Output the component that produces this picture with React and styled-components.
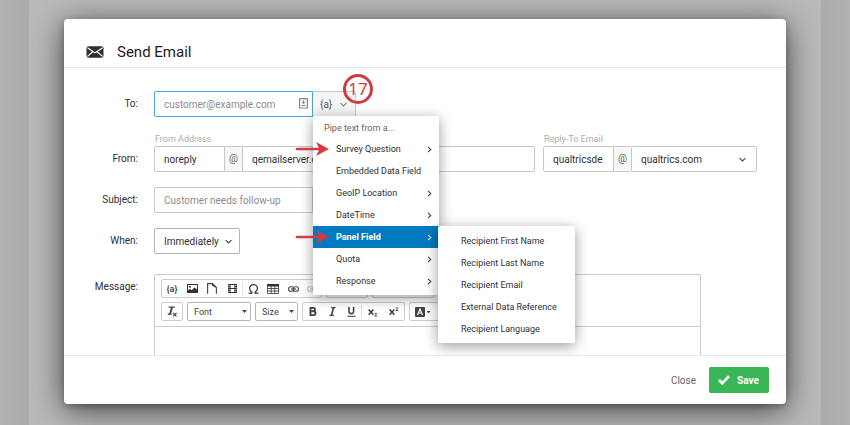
import React from "react";
import styled, { createGlobalStyle, css } from "styled-components";

const GlobalStyle = createGlobalStyle`
  *, *::before, *::after { box-sizing: border-box; }
  body {
    margin: 0;
    background: #b0b0b0;
    color: #2c3034;
    font-family: Roboto, "Liberation Sans", sans-serif;
    font-size: 10px;
  }
  button, input, select { font: inherit; color: inherit; margin: 0; }
`;

const Page = styled.div`
  height: 100vh;
  min-height: 425px;
  padding: 0 29px;
  background: linear-gradient(90deg, #b3b3b3, #ababab 29px, #ababab calc(100% - 29px), #b1b1b1);
`;

const Backdrop = styled.div`
  display: flex;
  height: 100%;
  padding: 19px 35px 21px;
  background: #bababa;
  overflow: hidden;
`;

const Dialog = styled.section`
  display: flex;
  flex: 1;
  flex-direction: column;
  min-width: 0;
  background: #fff;
  border-radius: 4px;
  box-shadow: 0 6px 32px rgba(0, 0, 0, 0.65), 0 2px 6px rgba(0, 0, 0, 0.25);
`;

const Header = styled.header`
  display: flex;
  align-items: center;
  gap: 13px;
  height: 49px;
  padding: 17px 22px 0;
  border-bottom: 1px solid #e6e6e6;
`;

const Title = styled.h1`
  margin: 0;
  font-size: 15px;
  font-weight: 400;
  color: #1c1c1c;
`;

const Form = styled.form`
  display: flex;
  flex: 1;
  flex-direction: column;
  min-height: 0;
  padding: 23px 29px 0 0;
  gap: 15px;
  overflow: hidden;
`;

const Row = styled.div`
  display: grid;
  grid-template-columns: 74px minmax(0, 1fr);
  column-gap: 16px;
  align-items: end;
  ${(p) => p.$fill && css`flex: 1; align-items: stretch; margin-top: 5px;`}
`;

const Label = styled.label`
  line-height: 26px;
  text-align: right;
`;

const Combo = styled.div`
  display: flex;
  height: 26px;
`;

const PipeCombo = styled(Combo)`
  width: 202px;
`;

const InputWrap = styled.div`
  position: relative;
  flex: 1;
  min-width: 0;
`;

const TextInput = styled.input`
  width: ${(p) => p.$width || "100%"};
  height: 26px;
  min-width: 0;
  padding: 0 9px;
  background: #fff;
  border: 1px solid ${(p) => (p.$focused ? "#49a7de" : "#c8c8c8")};
  border-radius: ${(p) => (p.$end ? "0 2px 2px 0" : "2px 0 0 2px")};
  outline: none;
  &::placeholder { color: #8c8c8c; opacity: 1; }
`;

const InputIcon = styled.span`
  position: absolute;
  top: 7px;
  right: 5px;
  display: flex;
`;

const PipeWrap = styled.div`
  position: relative;
`;

const PipeButton = styled.button`
  display: flex;
  align-items: center;
  justify-content: space-between;
  width: 43px;
  height: 26px;
  padding: 0 8px 0 7px;
  color: #555;
  background: #f5f5f5;
  border: 1px solid #c8c8c8;
  border-left: 0;
  border-radius: 0 2px 2px 0;
`;

const Badge = styled.span`
  position: absolute;
  top: -17px;
  left: 30px;
  width: 30px;
  height: 30px;
  color: #cf3a44;
  border: 3px solid #cf3a44;
  border-radius: 50%;
  font: 17px/24px "Noto Sans", sans-serif;
  text-align: center;
`;

const MenuSurface = css`
  position: absolute;
  z-index: 5;
  margin: 0;
  list-style: none;
  background: #fff;
  border-radius: 2px;
  box-shadow: 0 3px 14px rgba(0, 0, 0, 0.4);
`;

const Menu = styled.ul`
  ${MenuSurface}
  top: 25px;
  left: 0;
  width: 126px;
  padding: 2px 0 3px;
`;

const SubMenu = styled.ul`
  ${MenuSurface}
  top: 0;
  left: calc(100% - 1px);
  width: 137px;
  padding: 4px 0 3px;
`;

const MenuTitle = styled.li`
  padding-left: 11px;
  font-size: 9px;
  line-height: 20px;
  color: #666;
`;

const MenuItem = styled.li`
  position: relative;
`;

const MenuButton = styled.button`
  display: flex;
  align-items: center;
  justify-content: space-between;
  width: 100%;
  height: 22px;
  padding: 0 6px 0 23px;
  font-size: 9px;
  font-weight: ${(p) => (p.$active ? 700 : 400)};
  white-space: nowrap;
  color: ${(p) => (p.$active ? "#fff" : "#2c3034")};
  background: ${(p) => (p.$active ? "#027ac0" : "transparent")};
  border: 0;
`;

const Pointer = styled.svg`
  position: absolute;
  top: 4px;
  left: -18px;
  pointer-events: none;
`;

const Addresses = styled.div`
  display: grid;
  grid-template-columns: 381fr 214fr;
  gap: 8px;
`;

const Address = styled.fieldset`
  min-width: 0;
  margin: 0;
  padding: 0;
  border: 0;
`;

const Legend = styled.legend`
  padding: 0 0 0 1px;
  font-size: 9px;
  line-height: 14px;
  color: #adadad;
`;

const At = styled.span`
  width: 17px;
  line-height: 24px;
  text-align: center;
  color: #666;
  background: #f7f7f7;
  border: solid #c8c8c8;
  border-width: 1px 0;
`;

const SelectWrap = styled.div`
  position: relative;
  flex: ${(p) => (p.$grow ? 1 : "none")};
  width: ${(p) => p.$width || "auto"};
  min-width: 0;
`;

const Select = styled.select`
  display: block;
  width: 100%;
  height: ${(p) => (p.$small ? 19 : 26)}px;
  padding: 0 9px;
  appearance: none;
  background: #fff;
  border: 1px solid ${(p) => (p.$strong ? "#b5b5b5" : "#c8c8c8")};
  border-radius: 2px;
  ${(p) => p.$small && css`padding: 0 6px; font-size: 9px; color: #444;`}
`;

const SelectIcon = styled.span`
  position: absolute;
  top: 0;
  bottom: 0;
  right: ${(p) => p.$right}px;
  display: flex;
  align-items: center;
  pointer-events: none;
`;

const Editor = styled.div`
  display: flex;
  flex-direction: column;
  margin-right: 56px;
  border: 1px solid #ccc;
  border-bottom: 0;
  border-radius: 2px 2px 0 0;
`;

const Toolbar = styled.div`
  display: flex;
  flex-direction: column;
  gap: 4px;
  padding: 4px 6px 5px;
  border-bottom: 1px solid #ccc;
`;

const ToolLine = styled.div`
  display: flex;
  gap: 4px;
`;

const ToolGroup = styled.div`
  display: flex;
  align-items: center;
  height: 19px;
  border: 1px solid #ccc;
  border-radius: 2px;
`;

const Tool = styled.button`
  display: flex;
  align-items: center;
  justify-content: center;
  width: ${(p) => p.$width || 20}px;
  height: 17px;
  padding: 0;
  font-size: 9px;
  font-weight: 500;
  color: #333;
  background: none;
  border: 0;
  opacity: ${(p) => (p.$faded ? 0.3 : 1)};
`;

const Divider = styled.span`
  width: 1px;
  height: 13px;
  background: #ddd;
`;

const Message = styled.div`
  flex: 1;
  padding: 10px;
  outline: none;
`;

const Footer = styled.footer`
  display: flex;
  align-items: center;
  justify-content: flex-end;
  gap: 13px;
  height: 49px;
  padding: 0 17px;
  border-top: 1px solid #e6e6e6;
`;

const CloseButton = styled.button`
  padding: 0;
  color: #666;
  background: none;
  border: 0;
`;

const SaveButton = styled.button`
  display: flex;
  align-items: center;
  gap: 7px;
  height: 26px;
  width: 60px;
  padding: 0 9px;
  font-weight: 700;
  color: #fff;
  background: #3ab557;
  border: 0;
  border-radius: 2px;
`;

const Chevron = ({ right, color = "#888" }) => (
  <svg width="7" height="7" viewBox="0 0 7 7" fill="none" stroke={color} strokeWidth="1.1">
    <path d={right ? "M2 .8 4.8 3.5 2 6.2" : "M.6 2.2 3.5 5 6.4 2.2"} />
  </svg>
);

const Caret = () => (
  <svg width="5" height="3" viewBox="0 0 5 3" fill="#444"><path d="M0 0h5L2.5 3z" /></svg>
);

const Arrow = () => (
  <Pointer width="34" height="14" viewBox="0 0 34 14" aria-hidden="true">
    <path d="M2 7h24" stroke="#d23b45" strokeWidth="2.6" strokeLinecap="round" />
    <path d="M21 0 34 7 21 14 24.5 7z" fill="#d23b45" />
  </Pointer>
);

const EnvelopeIcon = () => (
  <svg width="18" height="12" viewBox="0 0 18 12" aria-hidden="true">
    <rect x=".5" y=".3" width="17" height="11.4" rx="2" fill="#303030" />
    <path d="M1.5 1.8 8 6.3q1 .7 2 0l6.5-4.5M1.5 10.3 6.6 6M16.5 10.3 11.4 6" fill="none" stroke="#fff" strokeWidth="1.1" />
  </svg>
);

const ContactIcon = () => (
  <svg width="9" height="11" viewBox="0 0 9 11" aria-hidden="true" fill="none" stroke="#888">
    <path d="M.6.6h7.8v9.4H.6z" strokeWidth="1.2" />
    <path d="M4.5 2.3v2.5M2.5 7.5h4" strokeWidth="1.2" />
    <path d="M2.7 4.1h3.6L4.5 6.2z" fill="#888" stroke="none" />
  </svg>
);

const ImageIcon = () => (
  <svg width="11" height="9" viewBox="0 0 11 9">
    <path fill="#333" fillRule="evenodd" d="M0 0h11v9H0zM1 1v5.5l2-1.8 1.6 1.5L7.5 3.5 10 5.5V1z" />
    <circle cx="3" cy="2.7" r="1" fill="#333" />
  </svg>
);

const PageIcon = () => (
  <svg width="10" height="11" viewBox="0 0 10 11" fill="none" stroke="#444" strokeWidth="1.1">
    <path d="M.6 10.8V.6h5l3.800 3.900v6.300M5.600.6v1.800l3.800 2.100" />
  </svg>
);

const FilmIcon = () => (
  <svg width="9" height="9" viewBox="0 0 9 9">
    <path fill="#333" fillRule="evenodd" d="M0 0h9v9H0zM2.6 1v3h3.800V1zM2.600 5v3h3.800V5zM.6 1v1h1V1zm0 2v1h1V3zm0 2v1h1V5zm0 2v1h1V7zm6.800-6v1h1V1zm0 2v1h1V3zm0 2v1h1V5zm0 2v1h1V7z" />
  </svg>
);

const OmegaIcon = () => (
  <svg width="11" height="10" viewBox="0 0 11 10" fill="none" stroke="#333" strokeWidth="1.2">
    <path d="M.6 9.2h3.3V8C2.3 7.2 1.6 6 1.6 4.5a3.9 3.9 0 0 1 7.8 0C9.4 6 8.7 7.2 7.1 8v1.200h3.300" />
  </svg>
);

const TableIcon = () => (
  <svg width="12" height="10" viewBox="0 0 12 10" fill="none" stroke="#333">
    <path d="M.5.5h11v9H.5zM.5 4.500h11M.5 7h11M4.200 2v7.500M7.800 2v7.500" strokeWidth=".8" />
    <path fill="#333" stroke="none" d="M0 0h12v2.500H0z" />
  </svg>
);

const LinkIcon = () => (
  <svg width="11" height="6" viewBox="0 0 11 6" fill="none" stroke="#444" strokeWidth="1.1">
    <rect x=".6" y=".8" width="5.2" height="4.4" rx="2" />
    <rect x="5.2" y=".8" width="5.2" height="4.4" rx="2" />
    <path d="M3 3h5" />
  </svg>
);

const BoldIcon = () => (
  <svg width="8" height="9" viewBox="0 0 8 9" fill="none" stroke="#444" strokeWidth="1.9">
    <path d="M1.500.9h2.700q1.800 0 1.800 1.700T4.200 4.300H1.500zM1.500 4.300h3q2 0 2 1.900t-2 1.900h-3z" />
  </svg>
);

const ItalicIcon = () => (
  <svg width="7" height="9" viewBox="0 0 7 9" fill="none" stroke="#444">
    <path d="M2.2.6h4.300M.5 8.400h4.300" strokeWidth="1.2" /><path d="M4.500.6 2.500 8.400" strokeWidth="1.7" />
  </svg>
);

const UnderlineIcon = () => (
  <svg width="9" height="10" viewBox="0 0 9 10" fill="none" stroke="#444">
    <path d="M2 0v4.600q0 2 2.300 2t2.300-2V0" strokeWidth="1.6" /><path d="M.5 9.300h8" strokeWidth="1.1" />
  </svg>
);

const ScriptIcon = ({ sup }) => (
  <svg width="10" height="10" viewBox="0 0 10 10" fill="none" stroke="#444">
    <path d="m.7 2.500 4.600 5.300M5.300 2.500.7 7.800" strokeWidth="1.6" />
    <path d={sup ? "M6.800 1.200q2-1.200 2 .2L6.900 3.600h2.500" : "M6.600 6.600q2-1.200 2 .2L6.700 9.100h2.500"} strokeWidth=".9" />
  </svg>
);

const ClearFormatIcon = () => (
  <svg width="11" height="11" viewBox="0 0 11 11" fill="none" stroke="#444">
    <path d="M1.600 1.200h6.200M.7 8.200h4" strokeWidth="1.3" />
    <path d="M5 1.200 3 8.200" strokeWidth="1.9" />
    <path d="m6 6.800 3.500 3.500M9.500 6.800 6 10.300" strokeWidth="1.2" />
  </svg>
);

const TextColorIcon = () => (
  <svg width="16" height="10" viewBox="0 0 16 10">
    <rect width="10" height="10" rx="1" fill="#444" />
    <path d="M2.500 8 5 2l2.500 6M3.500 6h3" fill="none" stroke="#fff" strokeWidth="1.2" />
    <path d="M11.500 4h4l-2 2.500z" fill="#444" />
  </svg>
);

const CheckIcon = () => (
  <svg width="12" height="10" viewBox="0 0 12 10" fill="none" stroke="#fff" strokeWidth="2.6">
    <path d="M1 5 4.300 8.200 11 1.200" />
  </svg>
);

const pipeItems = [
  { label: "Survey Question", nested: true, pointed: true },
  { label: "Embedded Data Field" },
  { label: "GeoIP Location", nested: true },
  { label: "DateTime", nested: true },
  {
    label: "Panel Field",
    nested: true,
    active: true,
    pointed: true,
    children: [
      "Recipient First Name",
      "Recipient Last Name",
      "Recipient Email",
      "External Data Reference",
      "Recipient Language",
    ],
  },
  { label: "Quota", nested: true },
  { label: "Response", nested: true },
];

function PipeMenu() {
  return (
    <Menu>
      <MenuTitle>Pipe text from a...</MenuTitle>
      {pipeItems.map((item) => (
        <MenuItem key={item.label}>
          <MenuButton type="button" $active={item.active}>
            {item.label}
            {item.nested && <Chevron right color={item.active ? "#cfe8f7" : "#444"} />}
          </MenuButton>
          {item.pointed && <Arrow />}
          {item.children && (
            <SubMenu>
              {item.children.map((child) => (
                <li key={child}><MenuButton type="button">{child}</MenuButton></li>
              ))}
            </SubMenu>
          )}
        </MenuItem>
      ))}
    </Menu>
  );
}

function PipeToggle({ children }) {
  return (
    <PipeWrap>
      <PipeButton type="button" aria-label="Insert piped text">
        {"{a}"}
        <Chevron />
      </PipeButton>
      {children}
    </PipeWrap>
  );
}

export default function App() {
  return (
    <>
      <GlobalStyle />
      <Page>
        <Backdrop>
          <Dialog role="dialog" aria-labelledby="title">
            <Header>
              <EnvelopeIcon />
              <Title id="title">Send Email</Title>
            </Header>
            <Form id="email" onSubmit={(e) => e.preventDefault()}>
              <Row>
                <Label htmlFor="to">To:</Label>
                <PipeCombo>
                  <InputWrap>
                    <TextInput id="to" placeholder="customer@example.com" $focused />
                    <InputIcon><ContactIcon /></InputIcon>
                  </InputWrap>
                  <PipeToggle>
                    <PipeMenu />
                    <Badge>17</Badge>
                  </PipeToggle>
                </PipeCombo>
              </Row>
              <Row>
                <Label htmlFor="from">From:</Label>
                <Addresses>
                  <Address>
                    <Legend>From Address</Legend>
                    <Combo>
                      <TextInput id="from" defaultValue="noreply" $width="71px" />
                      <At>@</At>
                      <InputWrap>
                        <TextInput aria-label="From domain" defaultValue="qemailserver.com" $end />
                      </InputWrap>
                    </Combo>
                  </Address>
                  <Address>
                    <Legend>Reply-To Email</Legend>
                    <Combo>
                      <TextInput aria-label="Reply-to name" defaultValue="qualtricsde" $width="71px" />
                      <At>@</At>
                      <SelectWrap $grow>
                        <Select aria-label="Reply-to domain"><option>qualtrics.com</option></Select>
                        <SelectIcon $right={11}><Chevron color="#444" /></SelectIcon>
                      </SelectWrap>
                    </Combo>
                  </Address>
                </Addresses>
              </Row>
              <Row>
                <Label htmlFor="subject">Subject:</Label>
                <PipeCombo>
                  <InputWrap><TextInput id="subject" placeholder="Customer needs follow-up" /></InputWrap>
                  <PipeToggle />
                </PipeCombo>
              </Row>
              <Row>
                <Label htmlFor="when">When:</Label>
                <SelectWrap $width="86px">
                  <Select id="when" $strong><option>Immediately</option></Select>
                  <SelectIcon $right={8}><Chevron color="#444" /></SelectIcon>
                </SelectWrap>
              </Row>
              <Row $fill>
                <Label id="message-label">Message:</Label>
                <Editor>
                  <Toolbar>
                    <ToolLine>
                      <ToolGroup>
                        <Tool type="button" aria-label="Piped text">{"{a}"}</Tool>
                        <Tool type="button" aria-label="Image"><ImageIcon /></Tool>
                        <Tool type="button" aria-label="File"><PageIcon /></Tool>
                        <Tool type="button" aria-label="Media"><FilmIcon /></Tool>
                        <Divider />
                        <Tool type="button" aria-label="Special character"><OmegaIcon /></Tool>
                        <Tool type="button" aria-label="Table"><TableIcon /></Tool>
                        <Tool type="button" aria-label="Link"><LinkIcon /></Tool>
                        <Tool type="button" aria-label="Unlink" $width={18} $faded><LinkIcon /></Tool>
                      </ToolGroup>
                      <ToolGroup>
                        <Tool type="button" aria-label="Undo" />
                        <Tool type="button" aria-label="Redo" />
                      </ToolGroup>
                      <ToolGroup>
                        <Tool type="button" aria-label="Align left" />
                        <Tool type="button" aria-label="Align right" />
                        <Tool type="button" aria-label="Justify" />
                      </ToolGroup>
                    </ToolLine>
                    <ToolLine>
                      <ToolGroup>
                        <Tool type="button" aria-label="Remove format"><ClearFormatIcon /></Tool>
                      </ToolGroup>
                      <SelectWrap $width="64px">
                        <Select aria-label="Font" $small $strong><option>Font</option></Select>
                        <SelectIcon $right={4}><Caret /></SelectIcon>
                      </SelectWrap>
                      <SelectWrap $width="43px">
                        <Select aria-label="Size" $small $strong><option>Size</option></Select>
                        <SelectIcon $right={4}><Caret /></SelectIcon>
                      </SelectWrap>
                      <ToolGroup>
                        <Tool type="button" aria-label="Bold"><BoldIcon /></Tool>
                        <Tool type="button" aria-label="Italic" $width={18}><ItalicIcon /></Tool>
                        <Tool type="button" aria-label="Underline"><UnderlineIcon /></Tool>
                        <Divider />
                        <Tool type="button" aria-label="Subscript" $width={22}><ScriptIcon /></Tool>
                        <Tool type="button" aria-label="Superscript"><ScriptIcon sup /></Tool>
                      </ToolGroup>
                      <ToolGroup>
                        <Tool type="button" aria-label="Text color" $width={26}><TextColorIcon /></Tool>
                        <Tool type="button" aria-label="Background color" $width={26} />
                      </ToolGroup>
                    </ToolLine>
                  </Toolbar>
                  <Message contentEditable suppressContentEditableWarning role="textbox" aria-labelledby="message-label" />
                </Editor>
              </Row>
            </Form>
            <Footer>
              <CloseButton type="button">Close</CloseButton>
              <SaveButton type="submit" form="email"><CheckIcon />Save</SaveButton>
            </Footer>
          </Dialog>
        </Backdrop>
      </Page>
    </>
  );
}
